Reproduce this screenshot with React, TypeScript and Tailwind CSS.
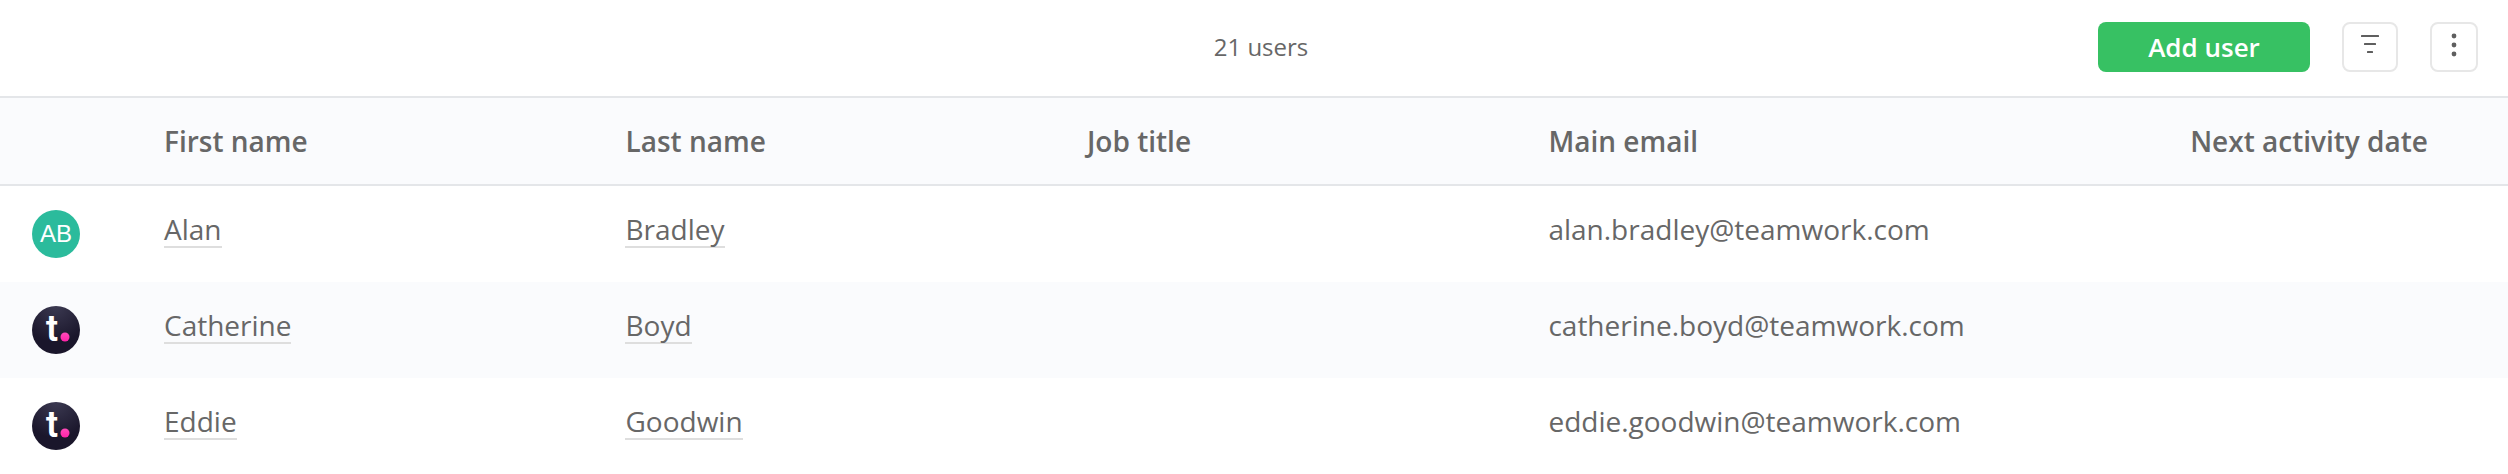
import React from 'react';

interface User {
  firstName: string;
  lastName: string;
  jobTitle?: string;
  email: string;
  nextActivity?: string;
  initials?: string;
}

const users: User[] = [
  { firstName: 'Alan', lastName: 'Bradley', email: 'alan.bradley@teamwork.com', initials: 'AB' },
  { firstName: 'Catherine', lastName: 'Boyd', email: 'catherine.boyd@teamwork.com' },
  { firstName: 'Eddie', lastName: 'Goodwin', email: 'eddie.goodwin@teamwork.com' },
];

const totalUsers = 21;

const FilterIcon = () => (
  <svg viewBox="0 0 18 18" className="w-[18px] h-[18px]" fill="#5f5f5f" aria-hidden="true">
    <rect x="0" y="0" width="18" height="2" rx="0.5" />
    <rect x="3" y="8" width="12" height="2" rx="0.5" />
    <rect x="6" y="16" width="6" height="2" rx="0.5" />
  </svg>
);

const MoreIcon = () => (
  <svg viewBox="0 0 6 24" className="w-[6px] h-6" fill="#5f5f5f" aria-hidden="true">
    <circle cx="3" cy="3" r="2.4" />
    <circle cx="3" cy="12" r="2.4" />
    <circle cx="3" cy="21" r="2.4" />
  </svg>
);

// Default picture for users without their own avatar
const BrandAvatar = () => (
  <svg viewBox="0 0 48 48" className="block w-12 h-12" role="img" aria-label="Teamwork">
    <defs>
      <radialGradient id="brand" cx="0.5" cy="0" r="0.75">
        <stop offset="0" stopColor="#3b3951" />
        <stop offset="1" stopColor="#1a162b" />
      </radialGradient>
      <linearGradient id="dot" x1="0" y1="0" x2="0" y2="1">
        <stop offset="0" stopColor="#ff4bb9" />
        <stop offset="1" stopColor="#ff22a8" />
      </linearGradient>
    </defs>
    <circle cx="24" cy="24" r="24" fill="url(#brand)" />
    <text x="20" y="35" textAnchor="middle" fill="#fff" fontFamily="Roboto, sans-serif" fontSize="36" fontWeight="600">
      t
    </text>
    <circle cx="33" cy="31" r="4.5" fill="url(#dot)" />
  </svg>
);

const Avatar: React.FC<{ user: User }> = ({ user }) =>
  user.initials ? (
    <div className="flex items-center justify-center w-12 h-12 rounded-full bg-[#2bbb9c] text-white text-2xl font-['Liberation_Sans',sans-serif]">
      {user.initials}
    </div>
  ) : (
    <BrandAvatar />
  );

const NameLink: React.FC<{ children: string }> = ({ children }) => (
  <a href="#" className="inline-block border-b-2 border-[#dedede]">
    {children}
  </a>
);

const Toolbar = () => (
  <header className="grid grid-cols-[1fr_auto_1fr] items-center pl-11 pr-[30px] pt-[22px] pb-6">
    <span className="col-start-2 text-2xl">{totalUsers} users</span>
    <div className="flex items-center justify-end gap-8">
      <button className="w-[212px] h-[50px] rounded-lg bg-[#37c163] text-white text-[26px] font-semibold">
        Add user
      </button>
      <button
        aria-label="Filter"
        className="flex justify-center w-14 h-[50px] pt-[11px] rounded-lg border-2 border-[#e7e7e7]"
      >
        <FilterIcon />
      </button>
      <button
        aria-label="More options"
        className="flex justify-center w-12 h-[50px] pt-[9px] rounded-lg border-2 border-[#e7e7e7]"
      >
        <MoreIcon />
      </button>
    </div>
  </header>
);

const UsersTable = () => (
  <table className="w-full table-fixed border-separate border-spacing-0 text-left text-[28px] leading-[34px]">
    <thead>
      <tr className="h-[90px] bg-[#fafbfd] *:border-y-2 *:border-[#e4e6e9] *:font-semibold">
        <th className="w-[164px]" aria-label="Avatar"></th>
        <th className="w-[18.4%]">First name</th>
        <th className="w-[18.4%]">Last name</th>
        <th className="w-[18.4%]">Job title</th>
        <th className="w-[18.4%]">Main email</th>
        <th className="pr-20 text-right">Next activity date</th>
      </tr>
    </thead>
    <tbody>
      {users.map((user) => (
        <tr key={user.email} className="h-24 align-top even:bg-[#fafbfd]">
          <td className="pl-8 pt-6">
            <Avatar user={user} />
          </td>
          <td className="pt-[26px]">
            <NameLink>{user.firstName}</NameLink>
          </td>
          <td className="pt-[26px]">
            <NameLink>{user.lastName}</NameLink>
          </td>
          <td className="pt-[26px]">{user.jobTitle}</td>
          <td className="pt-[26px]">{user.email}</td>
          <td className="pt-[26px] pr-20 text-right">{user.nextActivity}</td>
        </tr>
      ))}
    </tbody>
  </table>
);

export default function App() {
  return (
    <main className="min-h-screen bg-white text-[#676767] font-['Open_Sans','Noto_Sans',sans-serif]">
      <Toolbar />
      <UsersTable />
    </main>
  );
}
